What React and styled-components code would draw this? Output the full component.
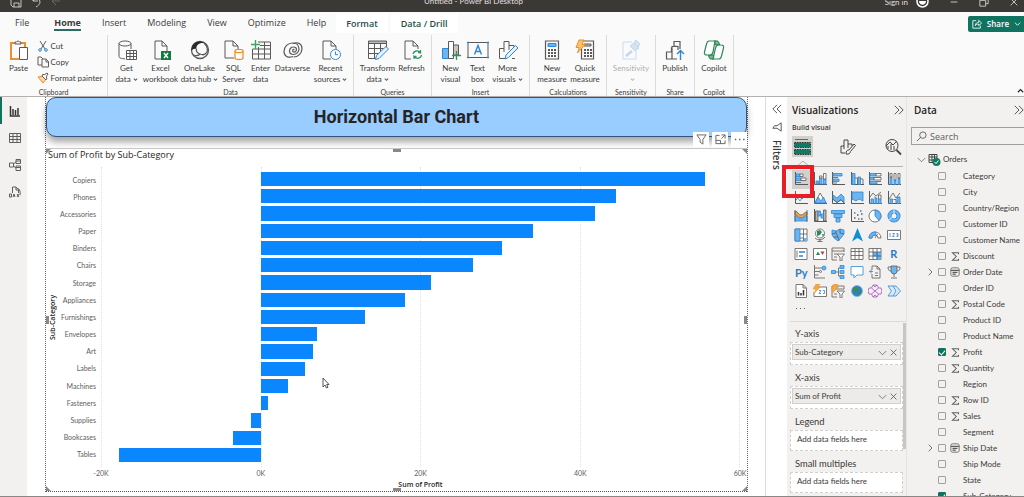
import { useState } from "react";
import styled, { createGlobalStyle } from "styled-components";

// data for the bar chart, values in thousands
const profits = [
  { name: "Copiers", value: 55.6 },
  { name: "Phones", value: 44.5 },
  { name: "Accessories", value: 41.9 },
  { name: "Paper", value: 34.1 },
  { name: "Binders", value: 30.2 },
  { name: "Chairs", value: 26.6 },
  { name: "Storage", value: 21.3 },
  { name: "Appliances", value: 18.1 },
  { name: "Furnishings", value: 13.1 },
  { name: "Envelopes", value: 7 },
  { name: "Art", value: 6.5 },
  { name: "Labels", value: 5.5 },
  { name: "Machines", value: 3.4 },
  { name: "Fasteners", value: 0.95 },
  { name: "Supplies", value: -1.2 },
  { name: "Bookcases", value: -3.5 },
  { name: "Tables", value: -17.8 },
];
const ticks = ["-20K", "0K", "20K", "40K", "60K"];
const axisMin = -20;
const axisRange = 80;

const tabs = ["File", "Home", "Insert", "Modeling", "View", "Optimize", "Help"];

const fieldList = [
  { name: "Category" },
  { name: "City" },
  { name: "Country/Region" },
  { name: "Customer ID" },
  { name: "Customer Name" },
  { name: "Discount", type: "sum" },
  { name: "Order Date", type: "date" },
  { name: "Order ID" },
  { name: "Postal Code", type: "sum" },
  { name: "Product ID" },
  { name: "Product Name" },
  { name: "Profit", type: "sum" },
  { name: "Quantity", type: "sum" },
  { name: "Region" },
  { name: "Row ID", type: "sum" },
  { name: "Sales", type: "sum" },
  { name: "Segment" },
  { name: "Ship Date", type: "date" },
  { name: "Ship Mode" },
  { name: "State" },
  { name: "Sub-Category" },
];

const wells = [
  { label: "Y-axis", field: "Sub-Category" },
  { label: "X-axis", field: "Sum of Profit" },
  { label: "Legend" },
  { label: "Small multiples" },
];

// colors used by the icons
const ink = "#5b5957";
const blue = "#2b88d8";
const sky = "#6cb5ee";
const green = "#217346";
const orange = "#e8912d";

/* ---------- ribbon icons, 20 x 20 ---------- */
const page = "M4 1h7l5 5v13H4z M11 1v5h5";

const ribbonIcons = {
  paste: (
    <>
      <path d="M6 3H2v16h8M12 3h4v4" stroke={orange} strokeWidth="2" />
      <path d="M6 4V2h1.5a1.700 1.700 0 0 1 3 0H12v2z" stroke={ink} />
      <path d="M10.500 7.500h8v12h-8z" stroke={ink} fill="#fff" />
    </>
  ),
  get: (
    <>
      <path d="M2 3.500v13c0 1.500 3 2.300 6 2.300M14 3.500V9" stroke={ink} />
      <ellipse cx="8" cy="3.500" rx="6" ry="2.500" stroke={ink} />
      <path d="M9.500 10.500h10v9h-10zM9.500 13.500h10M9.500 16.500h10M13 10.500v9M16.500 10.500v9" stroke={ink} fill="#fff" />
    </>
  ),
  excel: (
    <>
      <path d={page} stroke={ink} />
      <path d="M10 11h10v9H10z" fill="#107c41" />
      <path d="M13 13l4 5M17 13l-4 5" stroke="#fff" strokeWidth="1.400" />
    </>
  ),
  onelake: (
    <>
      <circle cx="10" cy="10" r="8.500" stroke={ink} strokeWidth="1.300" />
      <path d="M1.500 11C1 5 5 1 10 1.500c2 0 3 .5 4 1.500-5-.5-8 2-7.500 6-2-.5-4 0-5 2z" fill="#2b2a29" />
      <path d="M14 3c3 3 4 6 3 9-2 3-5 3-7 2-3-1-4-3-3.500-5M10 14c-2 2-4 2-6 1" stroke={ink} strokeWidth="1.300" />
    </>
  ),
  sql: (
    <>
      <path d="M10 18H1V1h8l5 5v3M9 1v5h5" stroke={ink} />
      <path d="M11 11v7c0 2 8 2 8 0v-7" stroke={orange} fill="#fff" strokeWidth="1.300" />
      <ellipse cx="15" cy="11" rx="4" ry="1.700" stroke={orange} fill="#fff" strokeWidth="1.300" />
    </>
  ),
  enter: (
    <>
      <path d="M7 2h12.500v17h-18V9M1.500 9h18M1.500 14h18M7.500 7v12M13.500 2v17M9 5.500h10.500" stroke={ink} />
      <path d="M4.500 0v9M0 4.500h9" stroke="#3fa06b" strokeWidth="1.400" />
    </>
  ),
  dataverse: (
    <>
      <path d="M10 16.500C5 18.500 1 16 1 11.500 1 6.500 5 3 9.500 3c4 0 6.500 2.500 6.500 6 0 3-2.500 5.500-5.500 5.500-2.500 0-4-1.500-4-3.500s1.500-4 4-4" stroke={ink} strokeWidth="1.200" />
      <path d="M10 3.500c5-2 9 .5 9 5 0 5-4 8.500-8.500 8.500M10.500 7c2 0 3 1 3 2.500S12 12.500 10.500 12s-1-3 1-2.500" stroke={ink} strokeWidth="1.200" />
    </>
  ),
  recent: (
    <>
      <path d="M10 19H2V1h8l5 5v3M10 1v5h5" stroke={ink} />
      <circle cx="14.500" cy="14.500" r="5" stroke={blue} fill="#fff" />
      <path d="M14.500 11.500v3.200h2.500" stroke={blue} />
    </>
  ),
  transform: (
    <>
      <path d="M.5 1h18v2.500H.5z" fill="#bdbbb8" stroke={ink} />
      <path d="M18.500 3.500V8M9 18.500H.5V1M.5 8.500h15M.5 13.500h10M6.500 3.500v15M12.500 3.500v8" stroke={ink} />
      <path d="M7.500 19.500l1-4L18 6.500l2.500 2.500-9.500 9.500z" stroke={blue} fill="#e5f2fd" />
    </>
  ),
  refresh: (
    <>
      <path d="M9 19H3V1h8l5 5v3M11 1v5h5" stroke={ink} />
      <path d="M11 14c.5-3 5-4.500 7.500-1.500V10M18.500 12.500H16M19.500 15c-.5 3.500-5 4.500-7.500 1.500V19M12 16.500h2.500" stroke="#2f9461" strokeWidth="1.300" />
    </>
  ),
  newVisual: (
    <>
      <path d="M1.500 8.500h6v10h-6z" fill={sky} stroke={blue} />
      <path d="M7.500 1.500h5v17h-5z" fill="#fff" stroke={ink} />
      <path d="M12.500 5h5v10h-5z" fill="#c8c6c4" stroke={ink} />
      <path d="M15.500 11v9M11 15.500h9" stroke="#2f9461" strokeWidth="1.300" />
    </>
  ),
  textBox: (
    <>
      <path d="M0 2.500h20v15H0z" stroke={ink} />
      <path d="M-.5 2h1v1h-1zM19.500 2h1v1h-1zM-.5 17h1v1h-1zM19.500 17h1v1h-1z" fill={blue} stroke={blue} />
      <path d="M6.500 14.500L10 5.500l3.500 9M7.700 11.500h4.600" stroke={blue} strokeWidth="1.400" />
    </>
  ),
  moreVisuals: (
    <>
      <path d="M7 18.500H1.500v-10H6M6 12V1.500h5V10M11 5.500h5V8M14 18.500h3" stroke={ink} />
      <path d="M7 19l1-4 9.500-9.500L20 8l-9.500 9.500z" stroke={blue} fill="#e5f2fd" />
    </>
  ),
  calculator: (
    <>
      <path d="M3.500 1h13v18h-13z" stroke={ink} strokeWidth="1.200" />
      <path d="M6 3.500h8v3H6z" fill={sky} stroke={blue} />
      <path d="M6 10h8M6 13h8M6 16h8" stroke={ink} strokeWidth="2" strokeDasharray="2 1" />
    </>
  ),
  quickMeasure: (
    <>
      <path d="M6.500 1h12v18h-12z" stroke={ink} strokeWidth="1.200" />
      <path d="M9 4h7v2H9z" fill="#c8c6c4" stroke={ink} />
      <path d="M9 10h8M9 13h8M9 16h8" stroke={ink} strokeWidth="2" strokeDasharray="2 1" />
      <path d="M4 0h5L7 4.500h3L2.500 13l1.700-5.500H1z" fill="#fbc36b" stroke={orange} />
    </>
  ),
  sensitivity: (
    <>
      <path d="M11 2H2v17h13v-8" stroke="#7fb2dc" />
      <path d="M5 16l6-5" stroke="#6ba6d6" strokeWidth="2.500" />
      <path d="M9 6l5 5 4-3-5-5zM13 3l2-3 4 4-2 3" fill="#9cc5e6" stroke="#6ba6d6" />
    </>
  ),
  publish: (
    <>
      <path d="M12 19H1.500v-7h5.500M7 19V6.500h6M6.500 12V8h1M9 6.500V1.500h6V9M9 6l4 .5V10" stroke={ink} strokeWidth="1.200" />
      <path d="M15.500 20v-9M12 14l3.500-3.500L19 14" stroke={blue} strokeWidth="1.400" />
    </>
  ),
  copilot: (
    <>
      <path d="M10 1h3c1 0 1.500.5 2 2l.5 2h-4zM10 19H7c-1 0-1.500-.5-2-2l-.5-2h5z" fill="#79b893" stroke={green} />
      <path d="M5 1h6L9 12c-.5 2-1 3-3 3H3C1 15 0 14 .5 12L2.500 4C3 2 3.500 1 5 1zM15 19H9l2.500-11c.5-2 1-3 3-3H17c2 0 3 1 2.500 3l-2 8c-.5 2-1 3-2.500 3z" stroke="#2f8a5b" fill="#fff" strokeWidth="1.200" fillOpacity=".7" />
    </>
  ),
};

// ribbon groups, the widths are in px
const groups = [
  {
    name: "Data",
    width: 246,
    items: [
      { icon: "get", label: ["Get", "data"], width: 34, menu: true },
      { icon: "excel", label: ["Excel", "workbook"], width: 34 },
      { icon: "onelake", label: ["OneLake", "data hub"], width: 44, menu: true },
      { icon: "sql", label: ["SQL", "Server"], width: 24 },
      { icon: "enter", label: ["Enter", "data"], width: 30 },
      { icon: "dataverse", label: ["Dataverse"], width: 34 },
      { icon: "recent", label: ["Recent", "sources"], width: 42, menu: true },
    ],
  },
  {
    name: "Queries",
    width: 78,
    items: [
      { icon: "transform", label: ["Transform", "data"], width: 38, menu: true },
      { icon: "refresh", label: ["Refresh"], width: 30 },
    ],
  },
  {
    name: "Insert",
    width: 98,
    items: [
      { icon: "newVisual", label: ["New", "visual"], width: 28 },
      { icon: "textBox", label: ["Text", "box"], width: 26 },
      { icon: "moreVisuals", label: ["More", "visuals"], width: 34, menu: true },
    ],
  },
  {
    name: "Calculations",
    width: 77,
    items: [
      { icon: "calculator", label: ["New", "measure"], width: 34 },
      { icon: "quickMeasure", label: ["Quick", "measure"], width: 32 },
    ],
  },
  {
    name: "Sensitivity",
    width: 49,
    items: [
      { icon: "sensitivity", label: ["Sensitivity", ""], width: 40, menu: true, disabled: true },
    ],
  },
  { name: "Share", width: 39, items: [{ icon: "publish", label: ["Publish"], width: 34 }] },
  { name: "Copilot", width: 39, items: [{ icon: "copilot", label: ["Copilot"], width: 34 }] },
];

/* ---------- visual gallery icons, 14 x 14 ---------- */
const axis = <path d="M1.500 0v12.500H14" stroke={ink} strokeWidth="1" />;
const bolt = <path d="M3 0h4L5 3h2.500L1.500 9l1-4H0z" fill="#f5a742" stroke={orange} strokeWidth=".5" />;

const gallery = [
  ["Stacked bar chart", <>{axis}<path d="M2 2h4v2.500H2zM2 6h5v2.500H2z" fill={sky} stroke={blue} /><path d="M6 2h3v2.500H6zM7 6h5v2.500H7zM2 10.500h5" fill="#fff" stroke={ink} /></>],
  ["Stacked column chart", <>{axis}<path d="M3 9h2.500v3H3zM6.500 6H9v6H6.500zM10.500 7H13v5h-2.500z" fill={sky} stroke={blue} /><path d="M6.500 4H9v2H6.500zM10.500 1.500H13V7h-2.500z" fill="#fff" stroke={ink} /></>],
  ["Clustered bar chart", <>{axis}<path d="M2 1.500h9v2.500H2zM2 7h6v2.500H2z" fill={sky} stroke={blue} /><path d="M2 5.500h5M2 11h4" stroke={ink} /></>],
  ["Clustered column chart", <>{axis}<path d="M2 1.500h3v11H2zM8 5h2.500v7.500H8z" fill={sky} stroke={blue} /><path d="M5 6h2.500v6.500M10.500 7H13v5.500" stroke={ink} /></>],
  ["100% stacked bar chart", <>{axis}<path d="M2 1.500h6V4H2zM2 5.500h4V8H2zM2 9.500h7V12H2z" fill={sky} stroke={blue} /><path d="M8 1.500h5V4H8zM6 5.500h7V8H6zM9 9.500h4" fill="#fff" stroke={ink} /></>],
  ["100% stacked column chart", <>{axis}<path d="M3 5h2v7.500H3zM7 8h2v4.500H7zM11 6h2v6.500h-2z" fill={sky} stroke={blue} /><path d="M3 1.500h2V5H3zM7 1.500h2V8H7zM11 1.500h2V6h-2z" fill="#fff" stroke={ink} /></>],
  ["Line chart", <>{axis}<path d="M2 9l3-4 3 3 3-3 3 2" stroke={ink} /><path d="M2 5l4 5 3-5 4-2" stroke={blue} /></>],
  ["Area chart", <>{axis}<path d="M2 12l5-10 6 10z" fill="#fff" stroke={ink} /><path d="M2 12l3-6 3 4 2.500-4L13 12z" fill={sky} stroke={blue} /></>],
  ["Stacked area chart", <>{axis}<path d="M2 4l4 3 4-4 3 3v6l-3-3-4 2.500L2 8z" fill={sky} stroke={blue} /><path d="M2 8.500l4 3 4-3 3 3" stroke={ink} /></>],
  ["100% stacked area chart", <>{axis}<path d="M2 1h11v9L9 8l-3 2-4-2z" fill={sky} stroke={blue} /></>],
  ["Line and stacked column chart", <>{axis}<path d="M3 8h2.500v4.500H3zM7 7h2v5.500H7zM10.500 8H13v4.500h-2.500z" fill={sky} stroke={blue} /><path d="M2 6l3-4 3 3 5-4M7 7V5.500M10.500 8V4H13v4" stroke={ink} /></>],
  ["Line and clustered column chart", <>{axis}<path d="M3 8h2.500v4.500H3zM10 6h3v6.500h-3z" fill={sky} stroke={blue} /><path d="M6.500 8.500h2.500v4" stroke={ink} /><path d="M2 8l4-6 3 5 4-5" stroke={ink} /></>],
  ["Ribbon chart", <><path d="M1 2c3 0 3 4 6 4s3-3 6-3v3c-3 0-3 3-6 3S4 6 1 6z" fill="#f2a54a" stroke={ink} /><path d="M1 7c3 0 3 3 6 3s3-3 6-3v5H1z" fill={sky} stroke={blue} /><path d="M1 1v12M13 1v12" stroke={ink} /></>],
  ["Waterfall chart", <>{axis}<path d="M2.500 2H5v10H2.500zM10.500 1H13v11h-2.500z" fill="#b5b3b0" stroke={ink} /><path d="M5 2h2.500v5H5zM8 5h2.500v4H8z" fill={sky} stroke={blue} /></>],
  ["Funnel chart", <path d="M.5 1.500h13v3H.5zM3 5h8v3.500H3zM5 9h4v4H5z" fill={sky} stroke={blue} />],
  ["Scatter chart", <>{axis}<path d="M4 9h1.500M7 6h1.500M11 10h1.500M11 5h1.500" stroke={ink} strokeWidth="1.400" /><path d="M4 4h1.500M8 10h1.500M10 2h1.500" stroke={blue} strokeWidth="1.400" /></>],
  ["Pie chart", <><circle cx="7" cy="7" r="6" fill="#fff" stroke={ink} /><path d="M7 1a6 6 0 0 1 4 10.500L7 7z" fill={sky} stroke={blue} /></>],
  ["Donut chart", <><circle cx="7" cy="7" r="4.500" stroke={blue} strokeWidth="4" /><circle cx="7" cy="7" r="4.500" stroke={sky} strokeWidth="2.500" /><path d="M7 .5V5M2 11l3-2.500" stroke="#fff" /></>],
  ["Treemap", <><path d="M1 1h12v12H1z" fill="#fff" stroke={ink} /><path d="M1 1h5v12H1z" fill={sky} stroke={blue} /><path d="M6 6h7M9.500 6v7M6 10h3.500M9.500 1v5" stroke={ink} /><path d="M10 10h3v3h-3z" fill={sky} /></>],
  ["Map", <><circle cx="7" cy="5.500" r="4.500" fill="#fff" stroke={ink} /><path d="M4 3l3-1 2 2-2 3-3 1zM9 6l2 0-1 3z" fill="#2f8a5b" /><path d="M2 10c3 3 8 2 10-1M7 11v2.500M4.500 13.500h5" stroke={ink} /></>],
  ["Filled map", <><path d="M1 2l4 1 4-2 4 1v4l-3 4-3 3-4-3-2-3z" fill={sky} stroke={blue} /><path d="M1 6l4-1 2 4M9 1v4l4 1M5 5V3M3 9l4 0 1 4" stroke={ink} /></>],
  ["Azure map", <path d="M7.500 0L13 13.500 7.500 10 2 13.500z" fill="#0f8fd6" />],
  ["Gauge", <><path d="M1 10a6 6 0 0 1 12 0h-3a3 3 0 0 0-6 0z" fill="#fff" stroke={ink} /><path d="M1 10a6 6 0 0 1 7-6l-.5 3A3 3 0 0 0 4 10z" fill={sky} stroke={blue} /><path d="M7 10l2.500-4" stroke={ink} /></>],
  ["Card", <><path d="M.5 2.500h13v9H.5z" fill="#fff" stroke={ink} /><path d="M3 5v4M5.500 5.500h2L5.500 8.500h2M9.500 5.500H11v3H9.500M9.500 7H11" stroke={blue} /></>],
  ["Multi-row card", <><path d="M1 1.500h12v11H1z" fill="#fff" stroke={ink} /><path d="M3 3.500v7" stroke={ink} /><path d="M5 5h6M5 9h4" stroke={blue} strokeWidth="1.600" /></>],
  ["KPI", <><path d="M.5 1.500h13v11H.5z" fill="#fff" stroke={ink} /><path d="M3 8l2-3.500L7 8z" fill="#2f8a5b" /><path d="M7.500 4.500h4L9.500 8z" fill="#d13438" /></>],
  ["Slicer", <><path d="M6 13H1V1h12v4M1 4h12M3 7h3M3 10h3" stroke={ink} /><path d="M6 7h7.500L11 10v4H9v-4z" fill="#fff" stroke={ink} /></>],
  ["Table", <path d="M1 1.500h12v11H1zM1 4.500h12M1 8.500h12M5 1.500v11M9 1.500v11" fill="#fff" stroke={ink} />],
  ["Matrix", <><path d="M1 1.500h12v11H1z" fill="#fff" stroke={ink} /><path d="M5 5h8v7.500H9V9H5z" fill={sky} /><path d="M1 5h12M1 9h12M5 1.500v11M9 1.500v11" stroke={ink} /><path d="M5 9h4v3.500M9 5v4h4" stroke={blue} /></>],
  ["R script visual", "R"],
  ["Python visual", "Py"],
  ["Key influencers", <><path d="M1.500 0v13H12M1.500 3h8M1.500 6.500h5M1.500 10h4" stroke={ink} /><circle cx="11" cy="3" r="2" fill={sky} stroke={blue} /><circle cx="7.500" cy="6.500" r="1" stroke={ink} /></>],
  ["Decomposition tree", <><path d="M4.500 7H7.500M7.500 3v8M7.500 3H9M7.500 11H9" stroke={ink} /><path d="M.5 5.500h4v3h-4zM9 .5h4v3H9zM9 5.500h4v3H9zM9 10.500h4v3H9z" fill={sky} stroke={blue} /></>],
  ["Q&A", <path d="M1 1.500h12v8.500H7l-3 3v-3H1z" fill="#fff" stroke={blue} />],
  ["Smart narrative", <><path d="M4 5V1h5l3 3v9H4V9M9 1v3h3M7 8h3M7 10.500h3" stroke={ink} /><path d="M1 6.500h4M3 4.500v4" stroke={blue} /></>],
  ["Goals", <><path d="M4 1h6v5a3 3 0 0 1-6 0z" fill={sky} stroke={ink} /><path d="M4 2H1c0 3 1 4 3 4M10 2h3c0 3-1 4-3 4M7 9v3M4 13h6" stroke={ink} /></>],
  ["Paginated report", <><path d="M2 .5h7l3.500 3.500v9.500H2zM9 .5V4h3.500" fill="#fff" stroke={ink} /><path d="M4.500 8v3.500M7 9v2.500M9.500 6v5.500" stroke="#333" strokeWidth="1.500" /></>],
  ["Card (new)", <><path d="M2 3h11.500v9.500H1V8" fill="#fff" stroke={ink} /><path d="M6 6.500h2L6 9.500h2M10 6.500h1.500v3H10" stroke={blue} />{bolt}</>],
  ["Slicer (new)", <><path d="M6 13H1V2h12v3M4 5h9M3 10h3" stroke={ink} /><path d="M6 7h7.500L11 10v4H9v-4z" fill="#fff" stroke={ink} />{bolt}</>],
  ["ArcGIS map", <><circle cx="7" cy="7" r="5.500" fill="#2f7fc4" stroke="#7fb6e2" /><path d="M4 3l3 0 1 3-3 3-2-2zM8 8l3-2 0 3-2 2z" fill="#3a8f4c" /></>],
  ["Power Apps", <path d="M5 1h4l1.500 3H13l1 3-1 3h-2.500L9 13H5l-1.500-3H1L0 7l1-3h2.500zM3.500 4L7 7l3.500-3M3.500 10L7 7l3.500 3M5 1l2 2 2-2M5 13l2-2 2 2" stroke="#a355b5" fill="#f6e9f8" />],
  ["Power Automate", <path d="M1 2h5l3 5-3 5H1l3.500-5zM6 2h3l4.500 5L9 12H6" stroke={blue} fill="#d9ecfb" />],
];

const RibbonIcon = ({ name }) => (
  <svg width="20" height="20" viewBox="0 0 20 20" fill="none" overflow="visible">
    {ribbonIcons[name]}
  </svg>
);

const Svg = ({ size = 12, box = 12, color = "#605e5c", width = 1, children }) => (
  <svg width={size} height={size} viewBox={`0 0 ${box} ${box}`} fill="none" stroke={color} strokeWidth={width}>
    {children}
  </svg>
);

const Caret = () => (
  <Svg size={5} box={6} width={1.3}>
    <path d="M1 2l2 2 2-2" />
  </Svg>
);

const Expand = ({ flip }) => (
  <Svg size={10} color="#3b3a39">
    {flip ? <path d="M6 1L1 6l5 5M11 1L6 6l5 5" /> : <path d="M1 1l5 5-5 5M6 1l5 5-5 5" />}
  </Svg>
);

const Ribbon = () => (
  <RibbonBar>
    <TabRow>
      {tabs.map((tab) => (
        <Tab key={tab} $active={tab === "Home"}>
          {tab}
        </Tab>
      ))}
      <ContextTab>Format</ContextTab>
      <ContextTab>Data / Drill</ContextTab>
      <ShareButton>
        <Svg size={10} color="#fff">
          <path d="M5 2H1v9h9V8M4 8c0-3 2-4 4-4V1.500L11.500 5 8 8V6C6 6 5 6.500 4 8z" />
        </Svg>
        Share
        <Svg size={7} box={8} color="#fff">
          <path d="M1 3l3 3 3-3" />
        </Svg>
      </ShareButton>
    </TabRow>
    <Groups>
      <Group $width={108}>
        <GroupItems>
          <Tool $width={36}>
            <RibbonIcon name="paste" />
            <span>Paste</span>
          </Tool>
          <SmallTools>
            <SmallTool>
              <Svg>
                <path d="M3 1l5 8M9 1L4 9" />
                <g stroke={blue}>
                  <circle cx="3" cy="10" r="1.300" />
                  <circle cx="9" cy="10" r="1.300" />
                </g>
              </Svg>
              Cut
            </SmallTool>
            <SmallTool>
              <Svg>
                <path d="M5 9H1V1h3l2 2M5 3h4l2.500 2.500V11H5zM9 3v3h2.500" />
              </Svg>
              Copy
            </SmallTool>
            <SmallTool>
              <Svg>
                <path d="M1 5l5 6 3-4-3-3z" fill="#fbd6a6" stroke={orange} />
                <path d="M5 4l4 4 1-2-1-1 2-3-1-1-3 2-1-1z" fill="#fff" />
              </Svg>
              Format painter
            </SmallTool>
          </SmallTools>
        </GroupItems>
        <GroupName>Clipboard</GroupName>
      </Group>
      {groups.map((group) => (
        <Group key={group.name} $width={group.width}>
          <GroupItems>
            {group.items.map((item) => (
              <Tool key={item.icon} $width={item.width} disabled={item.disabled}>
                <RibbonIcon name={item.icon} />
                <span>{item.label[0]}</span>
                {item.label.length > 1 && (
                  <span>
                    {item.label[1]}
                    {item.menu && <Caret />}
                  </span>
                )}
              </Tool>
            ))}
          </GroupItems>
          <GroupName>{group.name}</GroupName>
        </Group>
      ))}
      <Collapse aria-label="Collapse the ribbon">
        <Svg size={7} box={8} color="#222" width={1.3}>
          <path d="M1 6l3-3 3 3" />
        </Svg>
      </Collapse>
    </Groups>
  </RibbonBar>
);

const BarChart = () => (
  <Visual>
    <ChartTitle>Sum of Profit by Sub-Category</ChartTitle>
    <Chart>
      <YTitle>Sub-Category</YTitle>
      <Categories>
        {profits.map((item) => (
          <span key={item.name}>{item.name}</span>
        ))}
      </Categories>
      <GridLines>
        <i />
        <i />
        <i />
        <i />
      </GridLines>
      <Bars>
        {profits.map((item) => (
          <Bar
            key={item.name}
            style={{
              marginLeft: `${((Math.min(item.value, 0) - axisMin) / axisRange) * 100}%`,
              width: `${(Math.abs(item.value) / axisRange) * 100}%`,
            }}
          />
        ))}
      </Bars>
      <Ticks>
        {ticks.map((tick) => (
          <span key={tick}>{tick}</span>
        ))}
      </Ticks>
      <XTitle>Sum of Profit</XTitle>
    </Chart>
    <VisualTools>
      <button aria-label="Filters on this visual">
        <Svg size={11}>
          <path d="M1 1h10L7.500 6v5l-3-2V6z" />
        </Svg>
      </button>
      <button aria-label="Focus mode">
        <Svg size={11}>
          <path d="M5 1.500H1v9h10V7M1 7h5v3.500M7 1h4v4M11 1L7 5" />
        </Svg>
      </button>
      <button aria-label="More options">
        <Svg size={11} width={1.5}>
          <path d="M1 6h1.500M5.500 6H7M10 6h1.500" />
        </Svg>
      </button>
    </VisualTools>
    <Handle $x="0%" $y="0%" $corner />
    <Handle $x="50%" $y="0%" />
    <Handle $x="100%" $y="0%" $corner />
    <Handle $x="0%" $y="50%" $tall />
    <Handle $x="100%" $y="50%" $tall />
    <Handle $x="0%" $y="100%" $corner />
    <Handle $x="50%" $y="100%" />
    <Handle $x="100%" $y="100%" $corner />
    <Pointer width="8" height="12" viewBox="0 0 8 12">
      <path d="M1 1v9l2-2 1.500 3 1.500-.7L4.700 7.500H7z" fill="#fff" stroke="#555" />
    </Pointer>
  </Visual>
);

const Visualizations = () => (
  <VizPane>
    <PaneHeader>
      <h2>Visualizations</h2>
      <button aria-label="Collapse visualizations">
        <Expand />
      </button>
    </PaneHeader>
    <SubTitle>Build visual</SubTitle>
    <Modes>
      <Mode $active aria-label="Build visual">
        <svg width="17" height="18" viewBox="0 0 17 18" fill="none">
          <path d="M1 1.500h13" stroke="#6a6866" />
          <path d="M.5 4.500h16v5H.5zM.5 11.500h16v5H.5z" fill="#0f7b66" stroke="#333" strokeDasharray="1.500 1" />
        </svg>
      </Mode>
      <Mode aria-label="Format visual">
        <Svg size={18} box={18} color="#444">
          <path d="M6 15H2V8h3M5 11V2h4v8M9 6h4v2M7 16c0-3 1-4 3-4l5-6 1.500 1.500-5 6c0 2-2 3-4.500 2.500z" />
        </Svg>
      </Mode>
      <Mode aria-label="Analytics">
        <Svg size={18} box={18} color="#444">
          <circle cx="8" cy="7.500" r="6" />
          <path d="M4 11V8M7 12V6M10 12V8M2 8l4-4 3 3 4-4" />
          <path d="M12.500 12l4.500 4.500" strokeWidth="1.800" />
        </Svg>
      </Mode>
    </Modes>
    <Notch width="12" height="5" viewBox="0 0 12 5">
      <path d="M0 4.500h1L6 0l5 4.500h1" fill="#f3f1ef" stroke="#b3b0ad" />
    </Notch>
    <Gallery>
      {gallery.map(([name, icon], i) => (
        <GalleryButton key={name} title={name} $active={i === 0}>
          {typeof icon === "string" ? (
            icon
          ) : (
            <svg width="14" height="14" viewBox="0 0 14 14" fill="none" strokeWidth=".8">
              {icon}
            </svg>
          )}
        </GalleryButton>
      ))}
      <Highlight />
    </Gallery>
    <More aria-label="Get more visuals">
      <i />
      <i />
      <i />
    </More>
    <Wells>
      {wells.map((well) => (
        <section key={well.label}>
          <h3>{well.label}</h3>
          <Well>
            {well.field ? (
              <Pill>
                <span>{well.field}</span>
                <button aria-label={"Options for " + well.field}>
                  <Svg size={9}>
                    <path d="M1 4l5 5 5-5" />
                  </Svg>
                </button>
                <button aria-label={"Remove " + well.field}>
                  <Svg size={7}>
                    <path d="M1 1l10 10M11 1L1 11" strokeWidth="1.500" />
                  </Svg>
                </button>
              </Pill>
            ) : (
              <Empty>Add data fields here</Empty>
            )}
          </Well>
        </section>
      ))}
      <ScrollThumb />
    </Wells>
  </VizPane>
);

const DataPane = () => {
  const [search, setSearch] = useState("");
  const [checked, setChecked] = useState(["Profit", "Sub-Category"]);

  // tick or untick a field of the table
  const handleCheck = (ev, name) => {
    if (ev.target.checked) {
      setChecked([...checked, name]);
    } else {
      setChecked(checked.filter((field) => field !== name));
    }
  };

  return (
    <FieldsPane>
      <PaneHeader>
        <h2>Data</h2>
        <button aria-label="Collapse data">
          <Expand />
        </button>
      </PaneHeader>
      <SearchBox>
        <Svg size={11}>
          <circle cx="7.500" cy="4.500" r="3.500" />
          <path d="M5 7L1 11" />
        </Svg>
        <input
          type="text"
          aria-label="Search"
          placeholder="Search"
          value={search}
          onChange={(ev) => setSearch(ev.target.value)}
        />
      </SearchBox>
      <TableRow>
        <Svg size={9}>
          <path d="M1 4l5 5 5-5" />
        </Svg>
        <svg width="13" height="13" viewBox="0 0 13 13" fill="none">
          <path d="M1 1.500h8v8H1zM1 4h8M1 7h8M4 1.500v8M6.500 1.500v8" stroke="#444" />
          <circle cx="8.500" cy="9" r="4" fill="#0f7b66" />
          <path d="M6.500 9l1.500 1.500 2.500-3" stroke="#fff" />
        </svg>
        Orders
      </TableRow>
      {fieldList.map((field) => (
        <Field key={field.name}>
          <span>
            {field.type === "date" && (
              <Svg size={8}>
                <path d="M4 1l5 5-5 5" strokeWidth="1.300" />
              </Svg>
            )}
          </span>
          <input
            type="checkbox"
            checked={checked.includes(field.name)}
            onChange={(ev) => handleCheck(ev, field.name)}
          />
          <span>
            {field.type === "sum" && (
              <Svg size={9}>
                <path d="M10 3V1H2l5 5-5 5h8V9" strokeWidth="1.400" />
              </Svg>
            )}
            {field.type === "date" && (
              <Svg size={10}>
                <rect x="1" y="1" width="10" height="10" rx="2" />
                <path d="M1 4h10M3 6.500h6M3 8.500h4" strokeWidth="1.400" />
              </Svg>
            )}
          </span>
          {field.name}
        </Field>
      ))}
    </FieldsPane>
  );
};

const App = () => {
  return (
    <>
      <GlobalStyle />
      <Window>
        <TitleBar>
          <QuickTools>
            <Svg color="#c8c6c4">
              <path d="M1 1h10v10H3L1 9zM4 11V7h5v4" />
            </Svg>
            <Svg color="#c8c6c4">
              <path d="M3 1v4h5M3 5c3-4 7-2 7 1 0 2-2 4-4 5" />
            </Svg>
            <Svg color="#6b6966">
              <path d="M5 2L2 5l4 4M2 5h8" />
            </Svg>
          </QuickTools>
          <WindowTitle>Untitled - Power BI Desktop</WindowTitle>
          <WindowTools>
            Sign in
            <svg width="13" height="13" viewBox="0 0 13 13" fill="none">
              <circle cx="6.500" cy="6.500" r="5.500" stroke="#fff" strokeWidth="1.500" />
              <path d="M3 6h7c0 5-7 5-7 0z" fill="#fff" />
            </svg>
            <Svg size={10} color="#e1dfdd">
              <path d="M2 6h8" />
            </Svg>
            <Svg size={10} color="#e1dfdd">
              <path d="M1 4h7v7H1zM4 4V1h7v7H8" />
            </Svg>
            <Svg size={10} color="#e1dfdd">
              <path d="M2 2l8 8M10 2l-8 8" />
            </Svg>
          </WindowTools>
        </TitleBar>
        <Ribbon />
        <Workspace>
          <Rail>
            <RailButton $active aria-label="Report view">
              <Svg color="#333" width={1.5}>
                <path d="M1.500 1v10H11M4 4v6M6.500 5v5M9 3v7" />
              </Svg>
            </RailButton>
            <RailButton aria-label="Table view">
              <Svg>
                <path d="M.5 1.500h11v9H.5zM.5 4.500h11M.5 7.500h11M4 1.500v9M8 1.500v9" />
              </Svg>
            </RailButton>
            <RailButton aria-label="Model view">
              <Svg>
                <path d="M.5 4h4v4h-4zM7 .5h4.500v4H7zM7 7h4.500v4.500H7zM4.500 5L7 3M4.500 7L7 9M7 2h4M7 8.500h4" />
              </Svg>
            </RailButton>
            <RailButton aria-label="DAX query view">
              <Svg>
                <path d="M3.500 7V1H7l2.500 2.500V7M7 1v3h2.500M9.500 2.500C11 4 11.500 6 11 9M.5 8h2v3h-2zM4 11l1-3 1 3M8 8l2 3M10 8l-2 3" />
              </Svg>
            </RailButton>
          </Rail>
          <Canvas>
            <ReportPage>
              <Banner>Horizontal Bar Chart</Banner>
              <BarChart />
            </ReportPage>
          </Canvas>
          <FiltersPane>
            <button aria-label="Expand filters">
              <Expand flip />
            </button>
            <Svg size={10} color="#3b3a39">
              <path d="M11 1v10L6 7.500H1l2-3h3z" />
            </Svg>
            <h2>Filters</h2>
          </FiltersPane>
          <Visualizations />
          <DataPane />
        </Workspace>
      </Window>
    </>
  );
};

export default App;

const GlobalStyle = createGlobalStyle`
  * {
    box-sizing: border-box;
  }
  body {
    margin: 0;
    font-family: Lato, "Open Sans", sans-serif;
    font-size: 8px;
    color: #3b3a39;
  }
  button {
    padding: 0;
    border: 0;
    background: none;
    font: inherit;
    color: inherit;
    white-space: nowrap;
  }
  h1, h2, h3 {
    margin: 0;
    font-weight: 400;
  }
  svg {
    flex: none;
  }
`;

const Window = styled.div`
  display: flex;
  flex-direction: column;
  height: 100vh;
  overflow: hidden;
  background: #fff;
  border-bottom: 1px solid #8a8886;
`;

const TitleBar = styled.header`
  flex: none;
  display: grid;
  grid-template-columns: 1fr auto 1fr;
  grid-template-rows: 100%;
  align-items: end;
  height: 12px;
  padding: 0 5px 4px 10px;
  overflow: hidden;
  background: #3b3936;
  color: #e1dfdd;
`;

const QuickTools = styled.div`
  display: flex;
  gap: 8px;
`;

const WindowTitle = styled.div`
  padding-right: 82px;
  line-height: 13px;
`;

const WindowTools = styled.div`
  display: flex;
  align-items: center;
  justify-content: flex-end;
  gap: 20px;

  svg:first-child {
    margin-left: -12px;
  }
`;

const RibbonBar = styled.div`
  flex: none;
  background: #fafafa;
  border-bottom: 1px solid #b3b0ad;
`;

const TabRow = styled.nav`
  display: flex;
  align-items: center;
  height: 23px;
  padding-left: 4px;
  font-family: "Open Sans", sans-serif;
  font-size: 9px;
`;

const Tab = styled.button`
  height: 20px;
  padding: 0 10px 0 11px;
  font-weight: ${(props) => (props.$active ? 700 : 400)};

  &:first-child {
    margin-right: 4px;
  }

  &::after {
    content: "";
    display: block;
    height: 2px;
    background: ${(props) => (props.$active ? "#2b6b62" : "transparent")};
  }
`;

const ContextTab = styled.button`
  height: 19px;
  margin-right: 3px;
  padding: 0 10px;
  background: #fff;
  font-weight: 600;
  color: #1f4f48;
`;

const ShareButton = styled.button`
  display: flex;
  align-items: center;
  gap: 5px;
  height: 16px;
  margin-left: auto;
  padding: 0 3px 0 4px;
  border-radius: 2px 0 0 2px;
  background: #0f7360;
  color: #fff;
  font-size: 8px;
  font-weight: 600;
`;

const Groups = styled.div`
  display: flex;
  height: 61px;
`;

const Group = styled.section`
  display: flex;
  flex-direction: column;
  align-items: center;
  width: ${(props) => props.$width}px;
  border-right: 1px solid #dddbd9;
`;

const GroupItems = styled.div`
  flex: 1;
  display: flex;
  padding-top: 5px;
`;

const GroupName = styled.div`
  font-size: 7px;
  line-height: 8px;
`;

const Tool = styled.button`
  display: flex;
  flex-direction: column;
  align-items: center;
  width: ${(props) => props.$width}px;
  line-height: 11px;
  opacity: ${(props) => (props.disabled ? 0.4 : 1)};

  svg {
    margin-bottom: 3px;
  }

  span svg {
    margin: 0 0 0 2px;
  }
`;

const SmallTools = styled.div`
  display: flex;
  flex-direction: column;
  gap: 4px;
`;

const SmallTool = styled.button`
  display: flex;
  align-items: center;
  gap: 2px;
  height: 12px;
  padding-right: 4px;
`;

const Collapse = styled.button`
  display: flex;
  align-items: flex-end;
  margin-left: auto;
  padding-bottom: 2px;
`;

const Workspace = styled.div`
  flex: 1;
  display: flex;
  min-height: 0;
`;

const Rail = styled.nav`
  width: 27px;
  background: #f3f1ef;
`;

const RailButton = styled.button`
  display: flex;
  align-items: center;
  justify-content: center;
  width: 100%;
  height: 27px;
  border-left: 2px solid ${(props) => (props.$active ? "#0f7360" : "transparent")};
`;

const Canvas = styled.main`
  flex: 1;
  display: flex;
  min-width: 0;
  padding: 0 17px 4px 18px;
`;

const ReportPage = styled.div`
  flex: 1;
  display: flex;
  flex-direction: column;
  gap: 11px;
  border: dotted #666;
  border-width: 0 1px;
`;

const Banner = styled.h1`
  height: 40px;
  border: 1px solid #33557a;
  border-radius: 10px;
  background: #99ccff;
  box-shadow: 0 5px 7px rgba(0, 0, 0, 0.35);
  font-family: Roboto, sans-serif;
  font-size: 18px;
  font-weight: 700;
  line-height: 37px;
  text-align: center;
  color: #252423;
`;

const Visual = styled.section`
  flex: 1;
  display: flex;
  flex-direction: column;
  position: relative;
  padding: 0 7px 1px 0;
  border-top: 1px solid #c8c6c4;
  border-bottom: 1px dotted #555;
  background: #fff;
`;

const ChartTitle = styled.h2`
  height: 18px;
  padding-left: 2px;
  font-family: "Open Sans", sans-serif;
  font-size: 9px;
  line-height: 11px;
  color: #252423;
`;

const Chart = styled.div`
  flex: 1;
  display: grid;
  grid-template-columns: 14px 36px 1fr;
  grid-template-rows: 1fr 13px 10px;
  font-size: 7px;
  color: #605e5c;
`;

const YTitle = styled.div`
  grid-area: 1 / 1;
  writing-mode: vertical-rl;
  transform: rotate(180deg);
  font-family: "Open Sans", sans-serif;
  font-weight: 600;
  line-height: 14px;
  text-align: center;
  color: #252423;
`;

const Categories = styled.div`
  grid-area: 1 / 2;
  display: flex;
  flex-direction: column;
  padding: 4px 0;

  span {
    flex: 1;
    display: flex;
    align-items: center;
    justify-content: flex-end;
  }
`;

const GridLines = styled.div`
  grid-area: 1 / 3;
  display: flex;
  margin-left: 5px;

  i {
    flex: 1;
    border-left: 1px dotted #e1dfdd;
  }
  i:last-child {
    border-right: 1px dotted #e1dfdd;
  }
`;

const Bars = styled.div`
  grid-area: 1 / 3;
  display: flex;
  flex-direction: column;
  gap: 3px;
  margin-left: 5px;
  padding: 5px 0;
`;

const Bar = styled.div`
  flex: 1;
  background: #0a86ff;
`;

const Ticks = styled.div`
  grid-area: 2 / 3;
  display: flex;
  justify-content: space-between;
  margin-left: 5px;
  line-height: 13px;

  span {
    display: flex;
    justify-content: center;
    width: 0;
  }
`;

const XTitle = styled.div`
  grid-area: 3 / 3;
  margin-left: 5px;
  font-family: "Open Sans", sans-serif;
  font-weight: 600;
  line-height: 9px;
  text-align: center;
  color: #252423;
`;

const VisualTools = styled.div`
  position: absolute;
  top: -17px;
  right: 0;
  display: flex;
  gap: 3px;

  button {
    display: flex;
    align-items: center;
    justify-content: center;
    width: 16px;
    height: 15px;
    background: #fff;
  }
`;

// grab handles on the border of the selected visual
const Handle = styled.i`
  position: absolute;
  left: ${(props) => props.$x};
  top: ${(props) => props.$y};
  width: ${(props) => (props.$tall ? 3 : props.$corner ? 5 : 8)}px;
  height: ${(props) => (props.$tall ? 8 : props.$corner ? 5 : 3)}px;
  transform: translate(-${(props) => props.$x}, -${(props) => props.$y});
  background: #8a8886;
  clip-path: ${(props) =>
    !props.$corner
      ? "none"
      : `polygon(${props.$x} ${props.$y}, ${props.$x === "0%" ? "100%" : "0%"} ${props.$y}, ${props.$x} ${
          props.$y === "0%" ? "100%" : "0%"
        })`};
`;

const Pointer = styled.svg`
  position: absolute;
  left: 276px;
  top: 228px;
`;

const FiltersPane = styled.aside`
  display: flex;
  flex-direction: column;
  align-items: center;
  gap: 8px;
  width: 22px;
  padding-top: 7px;
  border-left: 1px solid #dddbd9;

  button,
  svg {
    display: block;
  }

  h2 {
    writing-mode: vertical-rl;
    font-family: "Open Sans", sans-serif;
    font-size: 10px;
    font-weight: 600;
    line-height: 12px;
  }
`;

const VizPane = styled.aside`
  display: flex;
  flex-direction: column;
  width: 120px;
  padding-left: 5px;
  border-right: 1px solid #e6e4e2;
  background: #f3f1ef;
`;

const PaneHeader = styled.div`
  display: flex;
  align-items: center;
  justify-content: space-between;
  height: 26px;
  padding-right: 2px;

  h2 {
    font-family: "Open Sans", sans-serif;
    font-size: 10px;
    font-weight: 600;
    color: #252423;
  }

  button {
    display: flex;
  }
`;

const SubTitle = styled.h3`
  height: 13px;
  font-family: "Open Sans", sans-serif;
  font-size: 7px;
  font-weight: 600;
  line-height: 10px;
`;

const Modes = styled.div`
  display: flex;
  gap: 24px;
`;

const Mode = styled.button`
  display: flex;
  align-items: center;
  justify-content: center;
  width: 21px;
  height: 21px;
  background: ${(props) => (props.$active ? "#d2cfcc" : "none")};
`;

const Notch = styled.svg`
  margin: 4px 0 0 5px;
`;

const Gallery = styled.div`
  position: relative;
  display: grid;
  grid-template-columns: repeat(6, 1fr);
  grid-auto-rows: 1fr;
  height: 134px;
  margin-right: 3px;
  padding-top: 3px;
  border-top: 1px solid #b3b0ad;
`;

const GalleryButton = styled.button`
  display: flex;
  align-items: center;
  justify-content: center;
  background: ${(props) => (props.$active ? "#d2cfcc" : "none")};
  font-size: 11px;
  font-weight: 700;
  color: #2b7cc4;
`;

const Highlight = styled.div`
  position: absolute;
  top: -2px;
  left: -10px;
  width: 32px;
  height: 33px;
  border: 4px solid #ec1c24;
`;

const More = styled.button`
  display: flex;
  align-items: center;
  gap: 3px;
  height: 21px;
  padding: 0 4px 4px;

  i {
    width: 1px;
    height: 1px;
    background: #605e5c;
  }
`;

const Wells = styled.div`
  position: relative;
  flex: 1;
  display: flex;
  flex-direction: column;
  gap: 5px;
  min-height: 0;
  margin-left: -2px;
  padding: 4px 3px 0 0;
  border-top: 1px solid #dddbd9;

  h3 {
    padding-left: 5px;
    line-height: 16px;
  }
`;

const Well = styled.div`
  padding: 1px 1px 4px;
  border: 1px dashed #d2cfcc;
  background: #fff;
`;

const Pill = styled.div`
  display: flex;
  align-items: center;
  gap: 3px;
  height: 16px;
  padding: 0 3px 0 2px;
  border: 1px solid #d2cfcc;
  background: #edebe9;

  span {
    flex: 1;
  }

  button {
    display: flex;
  }
`;

const Empty = styled.div`
  padding: 1px 5px 0;
  line-height: 13px;
`;

const ScrollThumb = styled.i`
  position: absolute;
  top: 1px;
  right: 0;
  width: 3px;
  height: 126px;
  background: #c8c6c4;
`;

const FieldsPane = styled.aside`
  width: 117px;
  padding-left: 4px;
  background: #f3f1ef;

  h2 {
    padding-left: 3px;
  }

  ${PaneHeader} {
    padding-right: 0;
  }
`;

const SearchBox = styled.div`
  display: flex;
  align-items: center;
  gap: 3px;
  height: 18px;
  margin: 4px 0 5px;
  padding-left: 4px;
  border: 1px solid #a19f9d;
  border-right: 0;

  input {
    width: 100%;
    padding: 0;
    border: 0;
    outline: 0;
    background: none;
    font-family: "Open Sans", sans-serif;
    font-size: 9px;
  }
  input::placeholder {
    color: #605e5c;
  }
`;

const TableRow = styled.div`
  display: flex;
  align-items: center;
  gap: 2px;
  height: 18px;
  padding-left: 6px;
`;

const Field = styled.label`
  display: grid;
  grid-template-columns: 11px 9px 10px 1fr;
  gap: 3px;
  align-items: center;
  height: 16px;
  padding-left: 13px;
  white-space: nowrap;

  span {
    display: flex;
    justify-content: center;
  }

  input {
    appearance: none;
    display: flex;
    justify-content: center;
    width: 8px;
    height: 8px;
    margin: 0;
    border: 1px solid #a19f9d;
    border-radius: 1px;
  }
  input:checked {
    border-color: #0f7360;
    background: #0f7360;
  }
  input:checked::before {
    content: "";
    width: 3px;
    height: 5px;
    border: solid #fff;
    border-width: 0 1px 1px 0;
    transform: rotate(40deg);
  }
`;
